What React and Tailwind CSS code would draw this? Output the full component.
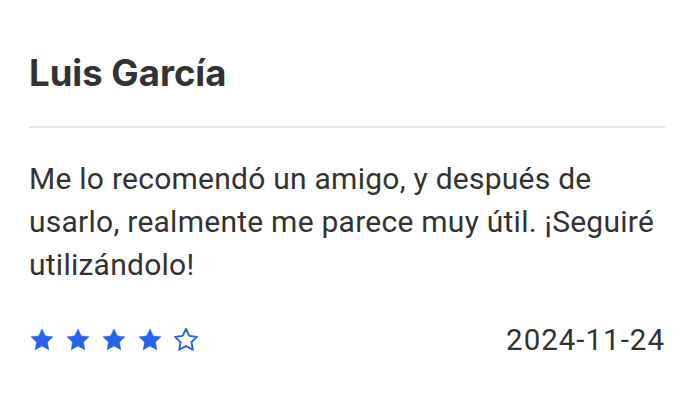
import React from 'react'

const Star = ({ filled }) => (
  <svg width="26" height="26" viewBox="0 0 24 24" className="text-[#2563eb]">
    <path
      d="M12 1.8l3.1 6.4 7 .9-5.1 4.9 1.3 7L12 17.6 5.7 21l1.3-7L1.9 9.1l7-.9z"
      fill={filled ? 'currentColor' : 'none'}
      stroke="currentColor"
      strokeWidth={filled ? 0.5 : 1.8}
      strokeLinejoin="round"
    />
  </svg>
)

const App = () => {
  const rating = 4
  return (
    <div className="min-h-[408px] bg-white px-[29px] pt-[51px] font-['Roboto',sans-serif] text-[#333333]">
      <h1 className="font-['Inter',sans-serif] text-[36.5px] font-bold leading-[44px]">Luis García</h1>
      <div className="mt-[31px] h-[2px] bg-[#dde6ef]" />
      <p className="mt-[29px] text-[30px] leading-[43px] tracking-[0.25px]">
        Me lo recomendó un amigo, y después de usarlo, realmente me parece muy útil. ¡Seguiré utilizándolo!
      </p>
      <div className="mt-[32px] flex items-center justify-between">
        <div className="flex gap-[10px]">
          {[1, 2, 3, 4, 5].map((i) => (
            <Star key={i} filled={i <= rating} />
          ))}
        </div>
        <span className="text-[29.5px] tracking-[1px]">2024-11-24</span>
      </div>
    </div>
  )
}

export default App
